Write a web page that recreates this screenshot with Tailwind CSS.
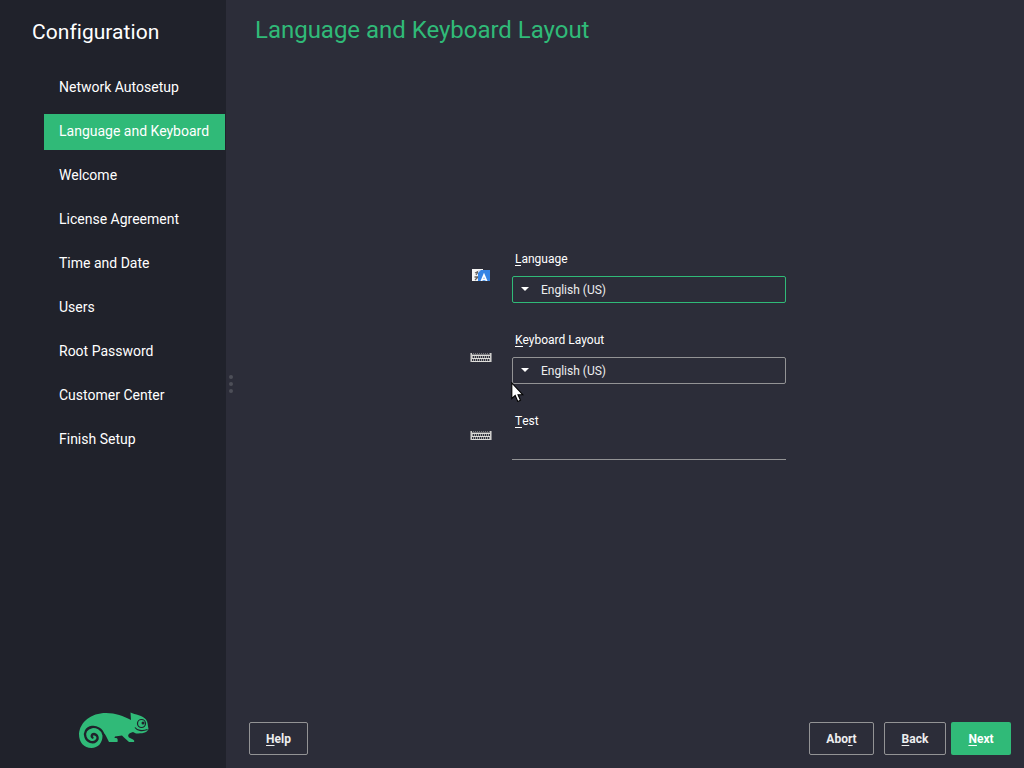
<!DOCTYPE html>
<html lang="en">
<head>
<meta charset="utf-8">
<title>Language and Keyboard Layout</title>
<script src="https://cdn.jsdelivr.net/npm/@tailwindcss/browser@4"></script>
</head>
<body class="relative flex h-screen w-screen overflow-hidden bg-[#2c2d39] font-['Roboto',sans-serif] text-white">
<svg class="hidden"><defs>
  <g id="kbd" shape-rendering="crispEdges">
    <path d="M1 .5h20" stroke="#77777c" stroke-dasharray="1 1"/>
    <path d="M.5 0v9M21.500 0v9" stroke="#85858a"/><path d="M1.500 0v9M20.500 0v9" stroke="#cfcecc"/>
    <path d="M2 1.500h18M2 2.500h18M2 5.500h18M2 8.500h18" stroke="#deddda"/>
    <path d="M2 1.500h18" stroke="#77777c"/>
    <path d="M2 4h18M3 7h17" stroke="#9a9a9c" stroke-width="2" stroke-dasharray="1 1"/>
  </g>
</defs></svg>
<aside class="flex w-[226px] shrink-0 flex-col bg-[#20222b]">
  <h2 class="mt-[20px] ml-8 text-[21px] leading-6 tracking-[0.05px]">Configuration</h2>
  <nav class="mt-[26px] ml-11 mr-px flex flex-col gap-2 text-sm leading-[34px]">
    <div class="h-9 pl-[15px]">Network Autosetup</div>
    <div class="h-9 bg-[#30ba78] pl-[15px]">Language and Keyboard</div>
    <div class="h-9 pl-[15px]">Welcome</div>
    <div class="h-9 pl-[15px]">License Agreement</div>
    <div class="h-9 pl-[15px]">Time and Date</div>
    <div class="h-9 pl-[15px]">Users</div>
    <div class="h-9 pl-[15px]">Root Password</div>
    <div class="h-9 pl-[15px]">Customer Center</div>
    <div class="h-9 pl-[15px]">Finish Setup</div>
  </nav>
  <svg class="mt-auto mb-[19px] ml-[78px] h-[38px] w-[72px]" viewBox="0 0 72 38">
    <path fill="#30ba78" d="M1 23C2 11 13 2 28 2c10 0 17 3 25 7L52.500 1.500C57 3.500 65 4.500 68 8.500C70 11 69.500 14 70.500 18C69 22 64 22.500 58 22.500L55 21C51 22 49 24 51 26.500L55 28.500C56.500 29.500 56.500 30 56 31H51L46 26.500L44 24.500L37 25.500L36.500 27H38C39.500 27 40 28.500 39.500 31H31L28 25L26.500 22.500L24.500 25C24.500 32 20 37 13.500 37C6 37 1 31.500 1 23Z"/>
    <path d="M25.500 24C24 17.500 18 15.500 14 16C8 17 6 22 7.500 26C9 31 15 32.500 18 30C21 27.500 19.500 23.500 16 23C13.500 23 13 25.500 14.500 26.500" fill="none" stroke="#20222b" stroke-width="2.300" stroke-linecap="round"/>
    <circle cx="63.500" cy="12.500" r="4" fill="none" stroke="#20222b" stroke-width="1.200"/>
    <circle cx="65" cy="12" r="1.500" fill="#20222b"/>
    <path d="M57 16.500C59 19.500 64 20.500 69.500 18.500" fill="none" stroke="#20222b" stroke-width="1.200"/>
  </svg>
</aside>
<div class="flex w-[10px] shrink-0 flex-col items-center justify-center gap-[3px]">
  <i class="size-1 rounded-full bg-[#4d4e58]"></i><i class="size-1 rounded-full bg-[#4d4e58]"></i><i class="size-1 rounded-full bg-[#4d4e58]"></i>
</div>
<main class="flex flex-1 flex-col pr-[13px] pl-[13px]">
  <h1 class="mt-[15px] ml-[6px] text-2xl leading-[30px] tracking-[-0.02px] text-[#30ba78]">Language and Keyboard Layout</h1>
  <div class="mt-[205px] ml-[221px] flex flex-col text-xs">
    <section class="flex h-[81px] gap-5">
      <svg class="mt-[19px] h-[12px] w-[22px]" viewBox="0 0 22 12">
        <path fill="#f6f5f4" d="M2 0h11v12H2z"/>
        <path d="M5 4l4-2M8 3l-2 3M4.500 8h4M5 11l3-3" stroke="#66615e" stroke-width="1.300" fill="none"/>
        <path fill="#3584e4" d="M8 1h12v11H8z"/><path fill="#d5dcea" d="M8 1h3l-3 3z"/>
        <path d="M11 13l3-7 3 7M12.500 10.500h3" stroke="#fff" stroke-width="1.700" fill="none"/>
      </svg>
      <div class="w-[274px]">
        <label class="block h-[26px] pl-[3px] leading-[18px]"><span class="inline-block h-4 border-b border-white">L</span>anguage</label>
        <div class="flex h-[27px] items-center rounded-[2px] border border-[#30ba78] pl-2"><svg class="mb-px h-1 w-2" viewBox="0 0 8 4"><path fill="#fff" d="M0 0h8L4 4z"/></svg><span class="ml-3 text-[#eeeeef]">English (US)</span></div>
      </div>
    </section>
    <section class="flex h-[81px] gap-5">
      <svg class="mt-[22px] h-[9px] w-[22px]" viewBox="0 0 22 9"><use href="#kbd"/></svg>
      <div class="w-[274px]">
        <label class="block h-[26px] pl-[3px] leading-[18px]"><span class="inline-block h-4 border-b border-white">K</span>eyboard Layout</label>
        <div class="flex h-[27px] items-center rounded-[2px] border border-[#939395] pl-2"><svg class="mb-px h-1 w-2" viewBox="0 0 8 4"><path fill="#fff" d="M0 0h8L4 4z"/></svg><span class="ml-3 text-[#eeeeef]">English (US)</span></div>
      </div>
    </section>
    <section class="flex gap-5">
      <svg class="mt-[19px] h-[9px] w-[22px]" viewBox="0 0 22 9"><use href="#kbd"/></svg>
      <div class="h-[48px] w-[274px] border-b border-[#939395]">
        <label class="block pl-[3px] leading-[18px]"><span class="inline-block h-4 border-b border-white">T</span>est</label>
      </div>
    </section>
  </div>
  <footer class="mt-auto mb-[13px] flex text-xs font-bold text-[#eeeeef]">
    <button class="h-[33px] w-[59px] rounded-[2px] border border-[#939395]"><span class="underline decoration-1 underline-offset-2">H</span>elp</button>
    <button class="ml-auto h-[33px] w-[65px] rounded-[2px] border border-[#939395]">Abo<span class="underline decoration-1 underline-offset-2">r</span>t</button>
    <button class="ml-[10px] h-[33px] w-[62px] rounded-[2px] border border-[#939395]"><span class="underline decoration-1 underline-offset-2">B</span>ack</button>
    <button class="ml-[5px] h-[33px] w-[60px] rounded-[2px] bg-[#30ba78] text-white"><span class="underline decoration-1 underline-offset-2">N</span>ext</button>
  </footer>
</main>
<svg class="absolute top-[382px] left-[511px] h-[20px] w-[13px]" viewBox="0 0 13 20"><path d="M.8 1v15.500l3.400-3 2.600 6 2.700-1.200-2.500-5.600h4.700z" fill="#fff" stroke="#000" stroke-width="1.100"/></svg>
</body>
</html>
